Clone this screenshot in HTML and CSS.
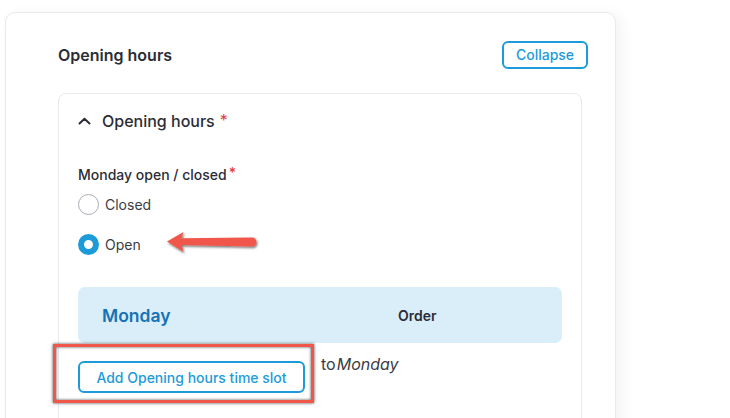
FILE: index.html
```html
<!DOCTYPE html>
<html>
<head>
<meta charset="utf-8">
<link rel="stylesheet" href="styles.css">
</head>
<body>
<div class="card">
  <div class="card-head">
    <div class="card-title">Opening hours</div>
    <button class="btn-outline btn-collapse">Collapse</button>
  </div>
  <div class="inner">
    <div class="inner-head">
      <svg class="chev" width="13" height="8" viewBox="0 0 13 8"><path d="M1.5 6.5 L6.5 1.8 L11.5 6.5" fill="none" stroke="#2b2d36" stroke-width="2" stroke-linecap="round" stroke-linejoin="round"/></svg>
      <span class="inner-title">Opening hours</span><span class="req req-lg">*</span>
    </div>
    <div class="field">
      <div class="field-label">Monday open / closed<span class="req">*</span></div>
      <label class="radio-row"><span class="radio"></span><span>Closed</span></label>
      <label class="radio-row"><span class="radio checked"></span><span>Open</span></label>
      <svg class="arrow" width="100" height="30" viewBox="160 226 100 30">
        <defs>
          <filter id="sh" x="-20%" y="-50%" width="140%" height="200%">
            <feDropShadow dx="1" dy="1.5" stdDeviation="1" flood-color="#000" flood-opacity="0.55"/>
          </filter>
        </defs>
        <path d="M167 240.5 L183.5 231 L181.5 237.2 L252 236.5 A4.5 4.5 0 0 1 252 245.5 L181.5 244 L183.5 251 Z" fill="#f1574b" filter="url(#sh)"/>
      </svg>
    </div>
    <div class="day-bar">
      <span class="day-name">Monday</span>
      <span class="day-order">Order</span>
    </div>
    <div class="slot-row">
      <div class="slot-btn-wrap">
        <button class="btn-outline btn-add">Add Opening hours time slot</button>
        <span class="highlight"></span>
      </div>
      <span class="slot-to">to<em>Monday</em></span>
    </div>
  </div>
</div>
</body>
</html>
```

FILE: styles.css
```css
* { box-sizing: border-box; }
html, body { margin: 0; height: 100%; overflow: hidden; }
body {
  background: #ffffff;
  font-family: Inter, "Noto Sans", sans-serif;
  color: #2b2d36;
  padding: 12px 0 0 5px;
}
.card {
  width: 611px;
  height: 430px;
  border: 1px solid #e9e9ee;
  border-radius: 10px;
  box-shadow: 6px 2px 14px rgba(30, 40, 80, 0.05);
  padding: 27px 27px 0 52px;
}
.card-head {
  display: flex;
  justify-content: space-between;
  align-items: center;
  height: 29px;
}
.card-title {
  font-size: 16px;
  font-weight: 600;
}
.btn-outline {
  font-family: Inter, "Noto Sans", sans-serif;
  background: #fff;
  border: 2px solid #1d9bd8;
  color: #1d9bd8;
  border-radius: 6px;
  font-size: 14px;
  font-weight: 500;
  cursor: pointer;
  padding: 0;
}
.btn-collapse {
  width: 86px;
  height: 28px;
}
.inner {
  margin-top: 24px;
  margin-right: 6px;
  height: 340px;
  border: 1px solid #e9e9ee;
  border-radius: 8px;
  padding: 16px 19px 0 19px;
}
.inner-head {
  display: flex;
  align-items: center;
  height: 22px;
}
.chev { margin-right: 11px; }
.inner-title {
  font-size: 16px;
  font-weight: 500;
}
.req { color: #e0413a; margin-left: 3px; font-size: 14px; }
.req-lg { font-size: 16px; margin-left: 5px; position: relative; top: -1px; }
.field {
  position: relative;
  margin-top: 33px;
}
.field-label {
  font-size: 14px;
  font-weight: 500;
  line-height: 20px;
  height: 20px;
}
.field-label .req { position: relative; top: -2px; margin-left: 2px; }
.radio-row {
  display: flex;
  align-items: center;
  gap: 6px;
  height: 20px;
  font-size: 14px;
  color: #3a3c45;
  margin-top: 9px;
}
.radio-row + .radio-row { margin-top: 20px; }
.radio {
  width: 21px;
  height: 21px;
  border-radius: 50%;
  border: 1px solid #a9abb3;
  background: #fff;
  flex: none;
}
.radio.checked {
  border: 6px solid #1d9bd8;
}
.arrow {
  position: absolute;
  left: 82px;
  top: 62px;
}
.day-bar {
  margin-top: 33px;
  height: 56px;
  background: #d9eef9;
  border-radius: 7px;
  display: flex;
  align-items: center;
  padding-left: 24px;
}
.day-name {
  font-size: 17.5px;
  font-weight: 600;
  color: #1672b5;
  width: 296px;
}
.day-order {
  font-size: 14px;
  font-weight: 600;
  color: #2b2d36;
}
.slot-row {
  display: flex;
  align-items: flex-start;
  margin-top: 18px;
}
.slot-btn-wrap {
  position: relative;
}
.btn-add {
  width: 227px;
  height: 32px;
  display: block;
}
.highlight {
  position: absolute;
  left: -25px;
  top: -17px;
  right: -9px;
  bottom: -10px;
  border: 3.5px solid #f0564a;
  box-shadow: 0 0 3px rgba(0,0,0,0.7), inset 0 0 3px rgba(0,0,0,0.7);
  pointer-events: none;
}
.slot-to {
  margin-left: 16px;
  font-size: 16px;
  color: #3a3c45;
  margin-top: -7px;
}
.slot-to em { font-style: italic; margin-left: 1px; }
```
